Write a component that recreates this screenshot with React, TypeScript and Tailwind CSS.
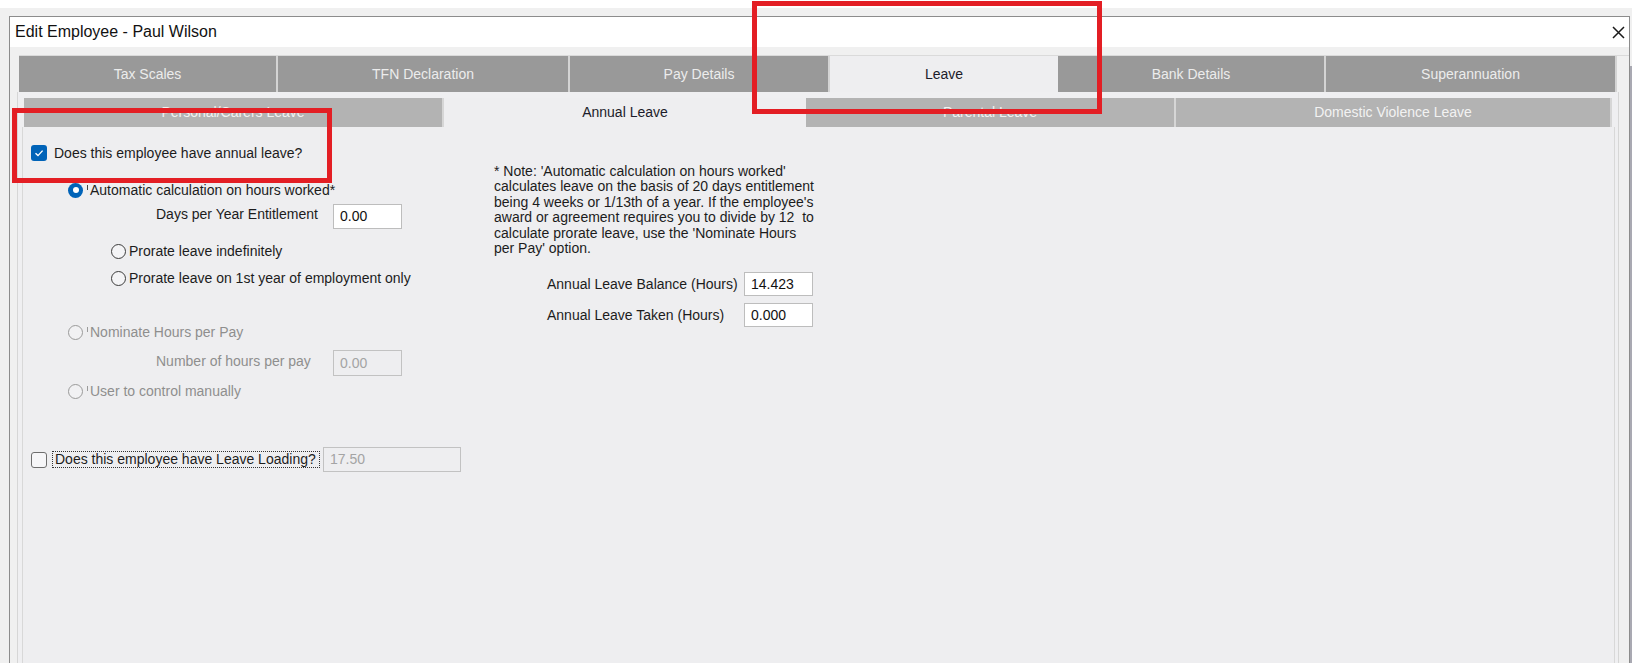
const mainTabs = [
  { label: "Tax Scales", w: "w-[259px]" },
  { label: "TFN Declaration", w: "w-[292px]" },
  { label: "Pay Details", w: "w-[260px]" },
  { label: "Leave", w: "w-[228px]", active: true },
  { label: "Bank Details", w: "w-[268px]" },
  { label: "Superannuation", w: "w-[291px]" },
];

const leaveTabs = [
  { label: "Personal/Carers Leave", w: "w-[420px]" },
  { label: "Annual Leave", w: "w-[362px]", active: true },
  { label: "Parental Leave", w: "w-[370px]" },
  { label: "Domestic Violence Leave", w: "w-[436px]" },
];

function CheckBox({ checked }: { checked?: boolean }) {
  if (checked) {
    return (
      <div className="w-[16px] h-[16px] rounded-[3px] bg-[#0063b8] flex items-center justify-center shrink-0">
        <svg width="12" height="12" viewBox="0 0 12 12">
          <polyline points="2.5,6.2 5,8.6 9.6,3.6" fill="none" stroke="white" strokeWidth="1.4" />
        </svg>
      </div>
    );
  }
  return <div className="w-[16px] h-[16px] rounded-[3px] border border-[#6e6e6e] bg-[#f6f6f8] shrink-0" />;
}

function Radio({ checked, disabled }: { checked?: boolean; disabled?: boolean }) {
  if (checked) {
    return (
      <div className="w-[15px] h-[15px] rounded-full bg-[#0063b8] flex items-center justify-center shrink-0">
        <div className="w-[6px] h-[6px] rounded-full bg-white" />
      </div>
    );
  }
  return (
    <div
      className={
        disabled
          ? "w-[15px] h-[15px] rounded-full border border-[#9a9a9a] bg-[#f1f1f3] shrink-0"
          : "w-[15px] h-[15px] rounded-full border border-[#3c3c3c] bg-[#f4f4f6] shrink-0"
      }
    />
  );
}

function TextBox({ value, disabled, w, h }: { value: string; disabled?: boolean; w: string; h: string }) {
  return (
    <div
      className={
        disabled
          ? `${w} ${h} border border-[#c2c2c2] bg-[#eeeef0] text-[#a4a4a4] flex items-center pl-[6px] shrink-0`
          : `${w} ${h} border border-[#bdbdbd] bg-white text-[#111] flex items-center pl-[6px] shrink-0`
      }
    >
      {value}
    </div>
  );
}

function Tick({ gray }: { gray?: boolean }) {
  return <div className={gray ? "w-[1px] h-[5px] bg-[#9a9a9a] self-start mt-[5px] ml-[4px]" : "w-[1px] h-[5px] bg-[#444] self-start mt-[5px] ml-[4px]"} />;
}

export default function App() {
  return (
    <div className="w-[1632px] h-[663px] overflow-hidden bg-white relative font-['Liberation_Sans',Arial,sans-serif] text-[14px] text-[#1c1c1c]">
      <div className="h-[8px] bg-white" />
      <div className="flex h-[655px] bg-[#f0f0f0] pt-[8px] pl-[9px]">
        {/* Dialog window */}
        <div className="w-[1621px] flex flex-col border-l border-t border-r border-[#8c8c8c]">
          {/* Title bar */}
          <div className="h-[30px] bg-white flex items-center justify-between pl-[5px] pr-[4px] shrink-0">
            <span className="text-[16px] text-[#111]">Edit Employee - Paul Wilson</span>
            <svg width="13" height="13" viewBox="0 0 13 13">
              <path d="M1 1 L12 12 M12 1 L1 12" stroke="#1a1a1a" strokeWidth="1.5" />
            </svg>
          </div>

          {/* Body */}
          <div className="flex-1 flex flex-col bg-[#f0f0f0] pt-[8px] pl-[9px]">
            {/* Main tabs */}
            <div className="flex h-[37px] shrink-0 border-t border-[#dadada]">
              {mainTabs.map((t) => (
                <div
                  key={t.label}
                  className={
                    t.active
                      ? `${t.w} h-full bg-[#eeeef0] text-[#1c1c2a] flex items-center justify-center`
                      : `${t.w} h-full bg-[#999999] text-[#ececec] border-r-[2px] border-[#d4d4d4] flex items-center justify-center`
                  }
                >
                  {t.label}
                </div>
              ))}
            </div>

            {/* Tab page */}
            <div className="ml-[-2px] w-[1602px] flex-1 flex flex-col border-l border-r border-[#d6d6d6] bg-[#efeff1] pt-[6px]">
              {/* Leave sub tabs */}
              <div className="flex h-[29px] ml-[6px] shrink-0">
                {leaveTabs.map((t) => (
                  <div
                    key={t.label}
                    className={
                      t.active
                        ? `${t.w} h-full bg-[#eeeef0] text-[#1c1c2a] flex items-center justify-center`
                        : `${t.w} h-full bg-[#b3b3b3] text-[#f2f2f2] border-r-[2px] border-[#d6d6d6] flex items-center justify-center`
                    }
                  >
                    {t.label}
                  </div>
                ))}
              </div>

              {/* Annual leave page */}
              <div className="ml-[4px] w-[1593px] flex-1 border-l border-r border-[#d8d8d8] bg-[#eeeef0] flex">
                {/* Left column */}
                <div className="w-[471px] pt-[16px] flex flex-col">
                  <div className="h-[20px] flex items-center ml-[8px]">
                    <CheckBox checked />
                    <span className="ml-[7px]">Does this employee have annual leave?</span>
                  </div>

                  <div className="mt-[17px] h-[20px] flex items-center ml-[45px]">
                    <Radio checked />
                    <Tick />
                    <span className="ml-[2px]">Automatic calculation on hours worked*</span>
                  </div>

                  <div className="mt-[4px] h-[25px] flex items-center ml-[133px]">
                    <span className="w-[177px] -mt-[4px]">Days per Year Entitlement</span>
                    <TextBox value="0.00" w="w-[69px]" h="h-[25px]" />
                  </div>

                  <div className="mt-[12px] h-[20px] flex items-center ml-[88px]">
                    <Radio />
                    <span className="ml-[3px]">Prorate leave indefinitely</span>
                  </div>

                  <div className="mt-[7px] h-[20px] flex items-center ml-[88px]">
                    <Radio />
                    <span className="ml-[3px]">Prorate leave on 1st year of employment only</span>
                  </div>

                  <div className="mt-[34px] h-[20px] flex items-center ml-[45px] text-[#8e8e8e]">
                    <Radio disabled />
                    <Tick gray />
                    <span className="ml-[2px]">Nominate Hours per Pay</span>
                  </div>

                  <div className="mt-[8px] h-[26px] flex items-center ml-[133px] text-[#8e8e8e]">
                    <span className="w-[177px] -mt-[4px]">Number of hours per pay</span>
                    <TextBox value="0.00" disabled w="w-[69px]" h="h-[26px]" />
                  </div>

                  <div className="mt-[5px] h-[20px] flex items-center ml-[45px] text-[#8e8e8e]">
                    <Radio disabled />
                    <Tick gray />
                    <span className="ml-[2px]">User to control manually</span>
                  </div>

                  <div className="mt-[46px] h-[25px] flex items-center ml-[8px]">
                    <CheckBox />
                    <div className="ml-[5px] w-[268px] h-[17px] border border-dotted border-[#333] flex items-center pl-[2px]">
                      Does this employee have Leave Loading?
                    </div>
                    <div className="ml-[3px]">
                      <TextBox value="17.50" disabled w="w-[138px]" h="h-[25px]" />
                    </div>
                  </div>
                </div>

                {/* Note column */}
                <div className="pt-[37px] flex flex-col">
                  <p className="leading-[15.4px] text-[#1c1c1c]">
                    * Note: 'Automatic calculation on hours worked'
                    <br />
                    calculates leave on the basis of 20 days entitlement
                    <br />
                    being 4 weeks or 1/13th of a year. If the employee's
                    <br />
                    award or agreement requires you to divide by 12&nbsp; to
                    <br />
                    calculate prorate leave, use the 'Nominate Hours
                    <br />
                    per Pay' option.
                  </p>
                  <div className="mt-[16px] h-[24px] flex items-center ml-[53px]">
                    <span className="w-[197px]">Annual Leave Balance (Hours)</span>
                    <TextBox value="14.423" w="w-[69px]" h="h-[24px]" />
                  </div>
                  <div className="mt-[7px] h-[24px] flex items-center ml-[53px]">
                    <span className="w-[197px]">Annual Leave Taken (Hours)</span>
                    <TextBox value="0.000" w="w-[69px]" h="h-[24px]" />
                  </div>
                </div>
              </div>
            </div>
          </div>
        </div>
        <div className="w-[2px] mt-[50px] bg-[#a9a9b2]" />
      </div>

      {/* Red annotation boxes */}
      <div className="absolute left-[12px] top-[108px] w-[320px] h-[75px] border-[5px] border-[#e31e24]" />
      <div className="absolute left-[752px] top-[1px] w-[350px] h-[113px] border-[5px] border-[#e31e24]" />
    </div>
  );
}
